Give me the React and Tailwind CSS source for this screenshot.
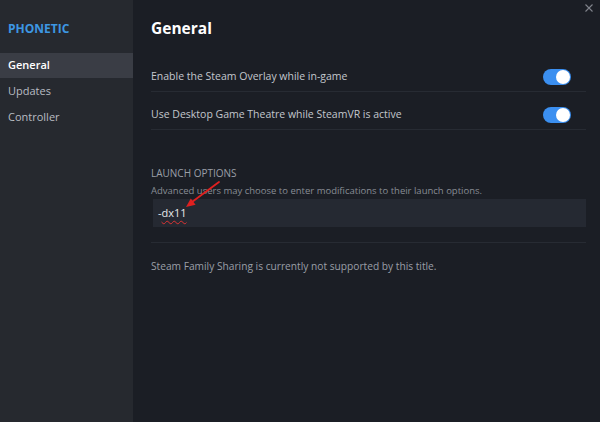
import React from 'react'

const Toggle = () => (
  <div className="w-[28px] h-[16px] rounded-full bg-[#3b8ff0] relative shrink-0">
    <div className="absolute right-[1px] top-[1px] w-[14px] h-[14px] rounded-full bg-white" />
  </div>
)

const Row = ({ label }) => (
  <div className="h-[38px] pt-[8px] flex items-center justify-between border-b border-[#272b33] pr-[15px]">
    <span className="text-[10.5px] text-[#c3c7cd]">{label}</span>
    <Toggle />
  </div>
)

export default function App() {
  return (
    <div
      className="w-[600px] h-[422px] flex bg-[#1b1e25] overflow-hidden"
      style={{ fontFamily: '"Open Sans", "Noto Sans", sans-serif' }}
    >
      {/* Sidebar */}
      <div className="w-[133px] shrink-0 bg-[#26292f] pt-[19px]">
        <div className="px-[8px] text-[12px] font-bold text-[#3d97e3] h-[20px] leading-[20px]">
          PHONETIC
        </div>
        <div className="mt-[14px]">
          <div className="h-[25px] bg-[#3a3d45] px-[8px] flex items-center text-[11px] text-white font-semibold">
            General
          </div>
          <div className="h-[26px] px-[8px] flex items-center text-[11px] text-[#b8bcc3]">Updates</div>
          <div className="h-[26px] px-[8px] flex items-center text-[11px] text-[#b8bcc3]">Controller</div>
        </div>
      </div>

      {/* Main */}
      <div className="flex-1 relative pl-[18px] pr-[14px]">
        <button className="absolute right-[7px] top-[4px] text-[#80848c]">
          <svg width="8" height="8" viewBox="0 0 8 8" stroke="currentColor" strokeWidth="1.1">
            <path d="M0.5 0.5L7.5 7.5M7.5 0.5L0.5 7.5" />
          </svg>
        </button>

        <h1 className="mt-[16px] h-[24px] leading-[24px] text-[15.5px] font-bold text-white">General</h1>

        <div className="mt-[14px]">
          <Row label="Enable the Steam Overlay while in-game" />
          <Row label="Use Desktop Game Theatre while SteamVR is active" />
        </div>

        <div className="mt-[36px] text-[10px] text-[#9a9fa7] leading-[14px]">LAUNCH OPTIONS</div>
        <div className="mt-[4px] text-[9.5px] text-[#878c94] leading-[14px]">
          Advanced users may choose to enter modifications to their launch options.
        </div>

        <div className="relative mt-[1px] ml-[2px] h-[28px] bg-[#252932] flex items-center px-[5px]">
          <span className="text-[11px] text-[#e6e8eb]">
            -<span className="underline decoration-wavy decoration-[#d33] underline-offset-[3px] decoration-1">dx11</span>
          </span>
          <svg className="absolute left-[26px] top-[-19px]" width="50" height="30" viewBox="0 0 50 30">
            <path d="M40 2L13 22" stroke="#e02020" strokeWidth="1.8" strokeLinecap="round" />
            <path d="M7 27L16.6 24.8L11.8 18.4Z" fill="#e02020" />
          </svg>
        </div>

        <div className="mt-[15px] border-b border-[#272b33]" />

        <div className="mt-[16px] text-[10.2px] text-[#9a9fa7] leading-[14px]">
          Steam Family Sharing is currently not supported by this title.
        </div>
      </div>
    </div>
  )
}
